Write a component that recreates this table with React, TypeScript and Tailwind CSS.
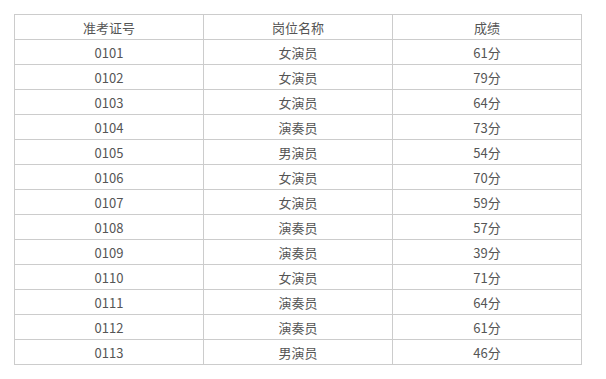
const rows: [string, string, string][] = [
  ["0101", "女演员", "61分"],
  ["0102", "女演员", "79分"],
  ["0103", "女演员", "64分"],
  ["0104", "演奏员", "73分"],
  ["0105", "男演员", "54分"],
  ["0106", "女演员", "70分"],
  ["0107", "女演员", "59分"],
  ["0108", "演奏员", "57分"],
  ["0109", "演奏员", "39分"],
  ["0110", "女演员", "71分"],
  ["0111", "演奏员", "64分"],
  ["0112", "演奏员", "61分"],
  ["0113", "男演员", "46分"],
];

export default function App() {
  return (
    <div
      className="h-[379px] w-[606px] bg-white pl-[14px] pt-[14px]"
      style={{ fontFamily: '"Noto Sans CJK SC", "Liberation Sans", sans-serif' }}
    >
      <table className="w-[568px] table-fixed border-collapse text-[13px] text-[#555]">
        <thead>
          <tr className="h-[25px]">
            <th className="border border-[#ccc] p-0 font-normal leading-none">准考证号</th>
            <th className="border border-[#ccc] p-0 font-normal leading-none">岗位名称</th>
            <th className="border border-[#ccc] p-0 font-normal leading-none">成绩</th>
          </tr>
        </thead>
        <tbody>
          {rows.map(([id, job, score]) => (
            <tr key={id} className="h-[25px]">
              <td className="border border-[#ccc] p-0 text-center leading-none">{id}</td>
              <td className="border border-[#ccc] p-0 text-center leading-none">{job}</td>
              <td className="border border-[#ccc] p-0 text-center leading-none">{score}</td>
            </tr>
          ))}
        </tbody>
      </table>
    </div>
  );
}
